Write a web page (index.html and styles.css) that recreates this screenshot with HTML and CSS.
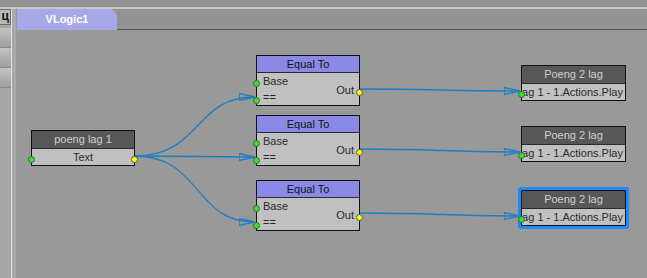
FILE: index.html
```html
<!DOCTYPE html>
<html lang="en">
<head>
    <meta charset="UTF-8">
    <title>VLogic1</title>
    <link rel="stylesheet" href="styles.css">
</head>
<body>
    <div class="top-strip"></div>
    <div class="workspace">
        <div class="sidebar">
            <div class="pin-btn">ц</div>
            <div class="side-btn"></div>
            <div class="side-btn"></div>
            <div class="side-btn"></div>
        </div>
        <div class="divider"></div>
        <div class="gutter"></div>
        <div class="editor">
            <div class="tabbar">
                <div class="tab">VLogic1</div>
                <div class="tab-rest"></div>
            </div>
            <div class="canvas">
                <!-- wires -->
                <svg class="wires" width="631" height="248" viewBox="0 0 631 248">
                    <defs>
                        <marker id="arrow" markerWidth="16" markerHeight="8" refX="15" refY="4" orient="auto" markerUnits="userSpaceOnUse">
                            <path d="M0,0.5 L16,4 L0,7.5 Z" fill="#1a86d0"/>
                        </marker>
                    </defs>
                    <path d="M119,126 C185,126 178,67 238,67" marker-end="url(#arrow)"/>
                    <path d="M119,126 C180,126 180,127 238,127" marker-end="url(#arrow)"/>
                    <path d="M119,126 C185,126 178,192 238,192" marker-end="url(#arrow)"/>
                    <path d="M344,59 C420,59 430,61 503,61" marker-end="url(#arrow)"/>
                    <path d="M344,119 C420,119 430,122 503,122" marker-end="url(#arrow)"/>
                    <path d="M344,183 C420,183 430,186 503,186" marker-end="url(#arrow)"/>
                </svg>

                <div class="node source" style="left:15px; top:100px;">
                    <div class="node-head">poeng lag 1</div>
                    <div class="node-body center">Text</div>
                    <span class="port in" style="top:25px;"></span>
                    <span class="port out" style="top:25px;"></span>
                </div>

                <div class="node compare" style="left:240px; top:25px;">
                    <div class="node-head">Equal To</div>
                    <div class="cmp-body">
                        <span class="cmp-base">Base</span>
                        <span class="cmp-out">Out</span>
                        <span class="cmp-eq">==</span>
                    </div>
                    <span class="port in" style="top:24px;"></span>
                    <span class="port in" style="top:41px;"></span>
                    <span class="port out" style="top:33px;"></span>
                </div>

                <div class="node compare" style="left:240px; top:85px;">
                    <div class="node-head">Equal To</div>
                    <div class="cmp-body">
                        <span class="cmp-base">Base</span>
                        <span class="cmp-out">Out</span>
                        <span class="cmp-eq">==</span>
                    </div>
                    <span class="port in" style="top:24px;"></span>
                    <span class="port in" style="top:41px;"></span>
                    <span class="port out" style="top:33px;"></span>
                </div>

                <div class="node compare" style="left:240px; top:150px;">
                    <div class="node-head">Equal To</div>
                    <div class="cmp-body">
                        <span class="cmp-base">Base</span>
                        <span class="cmp-out">Out</span>
                        <span class="cmp-eq">==</span>
                    </div>
                    <span class="port in" style="top:24px;"></span>
                    <span class="port in" style="top:41px;"></span>
                    <span class="port out" style="top:33px;"></span>
                </div>

                <div class="node target" style="left:505px; top:35px;">
                    <div class="node-head">Poeng 2 lag</div>
                    <div class="node-body clip"><span>lag 1 - 1.Actions.Play</span></div>
                    <span class="port in" style="top:25px;"></span>
                </div>

                <div class="node target" style="left:505px; top:96px;">
                    <div class="node-head">Poeng 2 lag</div>
                    <div class="node-body clip"><span>lag 1 - 1.Actions.Play</span></div>
                    <span class="port in" style="top:25px;"></span>
                </div>

                <div class="node target selected" style="left:505px; top:160px;">
                    <div class="node-head">Poeng 2 lag</div>
                    <div class="node-body clip"><span>lag 1 - 1.Actions.Play</span></div>
                    <span class="port in" style="top:25px;"></span>
                </div>
            </div>
        </div>
    </div>
</body>
</html>
```

FILE: styles.css
```css
body {
    margin: 0;
    width: 647px;
    height: 278px;
    overflow: hidden;
    background-color: #989898;
    font-family: 'Liberation Sans', Arial, sans-serif;
    font-size: 11px;
}

.top-strip {
    height: 7px;
    background-color: #929292;
    border-bottom: 2px solid #c6c6c6;
}

.workspace {
    display: flex;
    height: 269px;
}

/* left tool strip */
.sidebar {
    width: 11px;
    background-color: #a6a6a6;
    display: flex;
    flex-direction: column;
}

.pin-btn {
    height: 14px;
    background-color: #b8b8b8;
    border: 1px solid #6e6e6e;
    border-left: none;
    font-weight: bold;
    font-size: 12px;
    line-height: 12px;
    color: #111;
    text-align: right;
    padding-right: 1px;
    overflow: hidden;
    margin-bottom: 3px;
}

.side-btn {
    height: 19px;
    background: linear-gradient(#c4c4c4, #9e9e9e);
    border-bottom: 1px solid #8a8a8a;
}

.divider {
    width: 1px;
    background-color: #e2e2e2;
}

.gutter {
    width: 4px;
    background-color: #a9a9a9;
}

.editor {
    flex: 1;
    display: flex;
    flex-direction: column;
}

.tabbar {
    display: flex;
    height: 21px;
}

.tab {
    width: 100px;
    margin-left: 1px;
    background-color: #a8a8e8;
    color: #ffffff;
    font-weight: bold;
    text-align: center;
    line-height: 21px;
    clip-path: polygon(0 0, 94px 0, 100px 6px, 100px 100%, 0 100%);
}

.tab-rest {
    flex: 1;
    background-color: #939393;
    border-bottom: 1px solid #555555;
}

.canvas {
    flex: 1;
    position: relative;
    background-color: #999999;
}

.wires {
    position: absolute;
    left: 0;
    top: 0;
}

.wires path {
    fill: none;
    stroke: #1c7fc4;
    stroke-width: 1.3;
}

/* graph nodes */
.node {
    position: absolute;
    width: 102px;
    border: 1px solid #111111;
    background-color: #c0c0c0;
    color: #2a2a2a;
}

.target {
    width: 103px;
}

.node-head {
    height: 17px;
    line-height: 17px;
    text-align: center;
    background-color: #575757;
    color: #cfcfcf;
    border-bottom: 1px solid #2a2a2a;
    white-space: nowrap;
    overflow: hidden;
}

.compare .node-head {
    height: 16px;
    background-color: #8a8ae6;
    color: #111111;
}

.node-body {
    height: 16px;
    line-height: 16px;
}

.center {
    text-align: center;
}

.clip {
    display: flex;
    justify-content: flex-end;
    overflow: hidden;
    white-space: nowrap;
    padding-right: 2px;
}

.cmp-body {
    display: grid;
    grid-template-columns: 1fr auto;
    grid-template-rows: 16px 16px;
    padding: 0 5px 0 6px;
    height: 32px;
}

.cmp-base {
    line-height: 17px;
}

.cmp-out {
    grid-column: 2;
    grid-row: 1 / 3;
    align-self: center;
    padding-top: 2px;
}

.cmp-eq {
    grid-row: 2;
    line-height: 17px;
}

.port {
    position: absolute;
    width: 5px;
    height: 5px;
    border-radius: 50%;
    border: 1px solid #555555;
}

.port.in {
    left: -4px;
    background-color: #22ee22;
}

.port.out {
    right: -4px;
    background-color: #ffff00;
}

.selected {
    outline: 2px solid #1e8cff;
    outline-offset: 1px;
    border-radius: 1px;
    box-shadow: 0 0 0 3px #1e8cff;
}
```
